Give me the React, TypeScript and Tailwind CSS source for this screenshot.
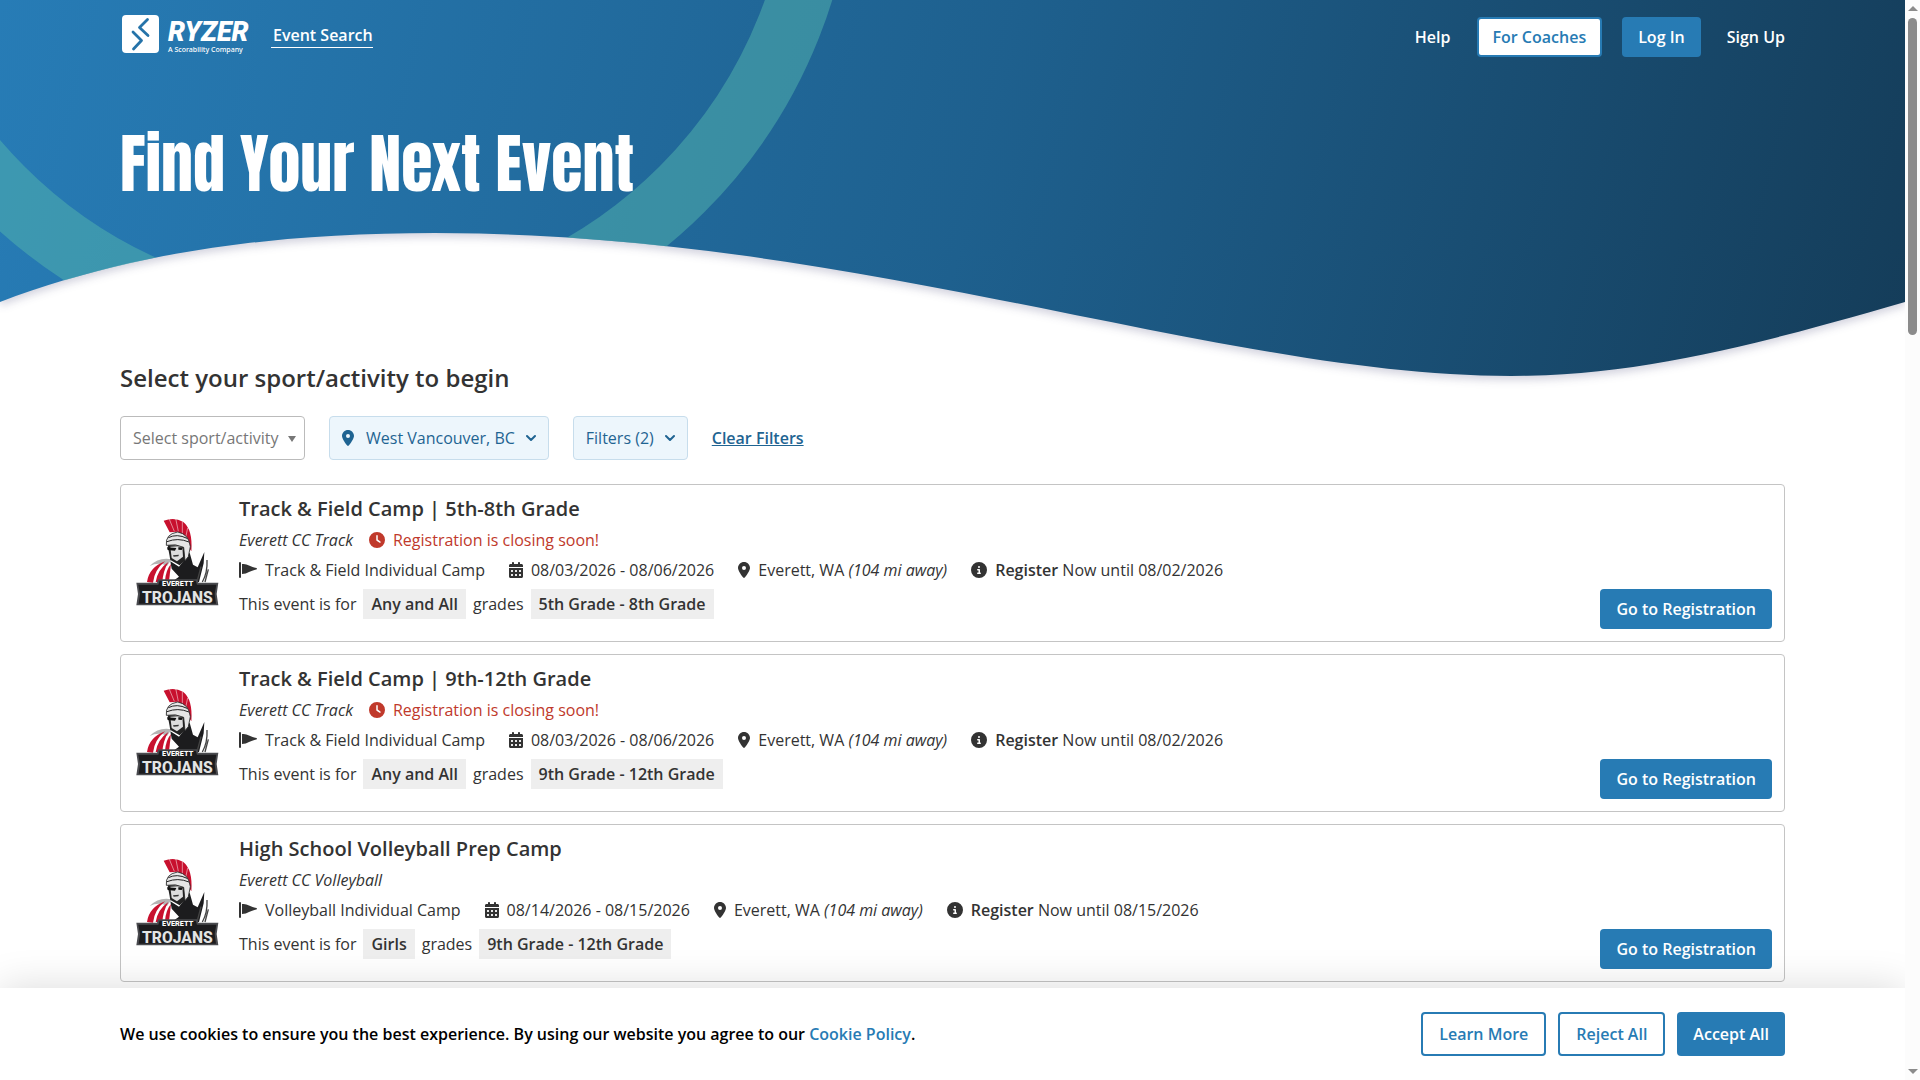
import React from "react";
import { FaCalendarDays, FaCircleInfo, FaClock, FaLocationDot } from "react-icons/fa6";

const BTN = "h-10 rounded-sm bg-[#277bb4] px-4 font-semibold text-white";
const BTN_OUTLINE = "h-11 rounded-sm border-2 border-[#277bb4] bg-white px-4 font-semibold text-[#277bb4]";
const BTN_FILTER = "flex h-11 items-center rounded-sm border border-[#c7ddec] bg-[#edf6fc] px-3 text-[#1f6492]";

const events = [
  {
    title: "Track & Field Camp | 5th-8th Grade",
    team: "Everett CC Track",
    closing: true,
    type: "Track & Field Individual Camp",
    dates: "08/03/2026 - 08/06/2026",
    until: "08/02/2026",
    who: "Any and All",
    grades: "5th Grade - 8th Grade",
  },
  {
    title: "Track & Field Camp | 9th-12th Grade",
    team: "Everett CC Track",
    closing: true,
    type: "Track & Field Individual Camp",
    dates: "08/03/2026 - 08/06/2026",
    until: "08/02/2026",
    who: "Any and All",
    grades: "9th Grade - 12th Grade",
  },
  {
    title: "High School Volleyball Prep Camp",
    team: "Everett CC Volleyball",
    closing: false,
    type: "Volleyball Individual Camp",
    dates: "08/14/2026 - 08/15/2026",
    until: "08/15/2026",
    who: "Girls",
    grades: "9th Grade - 12th Grade",
  },
];

type CampEvent = (typeof events)[number];

const RyzerLogo = () => (
  <svg width="130" height="42" viewBox="0 0 130 42" fill="none" aria-label="Ryzer">
    <rect x="0" y="1" width="37" height="38" rx="4" fill="#fff" />
    <path d="M25.500 5.500L17.500 13.500L26 21.500M11 18L19.500 26.500L11.500 35" stroke="#2573a9" strokeWidth="2.800" strokeLinecap="round" strokeLinejoin="round" />
    <text x="46" y="27" fill="#fff" fontSize="27" fontStyle="italic" fontWeight="900" fontFamily="Roboto, sans-serif">RYZER</text>
    <text x="46" y="38" fill="#fff" fontSize="7" fontWeight="500" fontFamily="'Noto Sans', sans-serif">A Scorability Company</text>
  </svg>
);

const TrojansLogo = () => (
  <svg width="100" height="110" viewBox="0 0 300 330" aria-label="Everett Trojans">
    {/* crest */}
    <path d="M104 44Q136 32 162 47Q192 70 187 136L175 118Q166 88 146 77L122 79Z" fill="#c8102e" />
    <path d="M121 40L136 76M140 37L148 76M160 46L160 82M176 66L170 94" stroke="#fff" strokeWidth="1.500" />
    {/* cape stripes */}
    <path d="M62 180Q90 152 128 160L114 180Q90 166 62 180Z" fill="#b4b4b4" />
    <path d="M54 228Q60 184 108 166Q76 192 72 230Z" fill="#c8102e" />
    <path d="M80 228Q86 190 118 168Q102 196 100 228Z" fill="#c8102e" />
    <path d="M108 226Q110 192 126 174L120 226Z" fill="#c8102e" />
    {/* body */}
    <path d="M124 166L150 182L182 140L192 176L206 184L226 138L224 172L210 228H128L150 212L128 188Z" fill="#1c1c1e" />
    <path d="M234 162Q236 200 220 228M238 190L228 228M216 182L204 228" stroke="#444" strokeWidth="4" fill="none" />
    {/* face and helmet */}
    <path d="M116 118L178 118L180 150L152 178L124 162Z" fill="#222" />
    <path d="M124 122L160 120L162 152L144 166L128 156Z" fill="#ddd" />
    <path d="M114 124L142 126L138 134L116 132ZM148 124L162 124L158 132L148 131Z" fill="#111" />
    <path d="M132 148L150 146L148 151L134 152Z" fill="#333" />
    <path d="M112 118Q108 84 146 78Q180 84 184 122L178 152L168 164L164 124Q140 112 112 118Z" fill="#e6e6e6" stroke="#222" strokeWidth="2.500" />
    <path d="M114 107Q146 94 180 108M118 95Q144 82 174 97" stroke="#222" strokeWidth="3" fill="none" />
    {/* name plate */}
    <path d="M22 230H84L88 220H204L208 230H268L263 264L268 298H22L27 264Z" fill="#4a4b4f" />
    <path d="M92 224H200L204 236H262L257 264L261 293H29L33 264L28 236H88Z" fill="#1c1c1e" />
    <text x="146" y="240" textAnchor="middle" fill="#fff" fontSize="22" fontWeight="800" fontFamily="Roboto, sans-serif">EVERETT</text>
    <text x="145" y="290" textAnchor="middle" fill="#e4e4e4" fontSize="47" fontWeight="800" fontFamily="Roboto, sans-serif">TROJANS</text>
  </svg>
);

const Pennant = () => (
  <svg width="18" height="16" viewBox="0 0 18 16" fill="currentColor" aria-hidden="true">
    <rect x="0" y="0" width="2" height="16" rx="1" />
    <path d="M3 2Q7 1.500 10 3.500Q14 5.500 17.500 6Q18.300 6.700 17.500 7.400Q13 8.500 10 10Q7 12 3 12Z" />
  </svg>
);

const Chevron = () => (
  <svg className="ml-[11px]" width="10" height="12" viewBox="0 0 10 12" fill="none" stroke="currentColor" strokeWidth="2" strokeLinecap="round" strokeLinejoin="round" aria-hidden="true">
    <path d="M1 4L5 8L9 4" />
  </svg>
);

const Hero = () => (
  <section className="relative h-[360px]">
    <svg className="absolute top-0 left-0 h-[400px] w-full" viewBox="0 0 1905 400" preserveAspectRatio="none" aria-hidden="true">
      <defs>
        <linearGradient id="sky" gradientUnits="userSpaceOnUse" x1="0" y1="0" x2="1920" y2="480">
          <stop offset="0" stopColor="#277cb6" />
          <stop offset="0.500" stopColor="#1e608e" />
          <stop offset="1" stopColor="#143b57" />
        </linearGradient>
        <clipPath id="wave">
          <path d="M0 0H1905V302C1760 344 1640 376 1511 376C1220 376 860 233 435 233C270 233 130 253 0 302Z" />
        </clipPath>
      </defs>
      <path
        className="drop-shadow-[0_4px_4px_rgba(30,30,90,0.2)]"
        d="M0 0H1905V302C1760 344 1640 376 1511 376C1220 376 860 233 435 233C270 233 130 253 0 302Z"
        fill="url(#sky)"
      />
      <circle cx="342" cy="-151" r="481" fill="none" stroke="#54b5ad" strokeOpacity="0.500" strokeWidth="64" clipPath="url(#wave)" />
    </svg>

    <div className="relative px-[120px]">
      <header className="flex h-[74px] items-center justify-between text-white">
        <div className="flex items-center gap-[19px] pb-1">
          <a href="#" className="pl-[2px]"><RyzerLogo /></a>
          <a href="#" className="border-b border-white pl-[2px] font-semibold leading-6">Event Search</a>
        </div>
        <nav className="flex items-center font-semibold">
          <a href="#" className="mr-[26px]">Help</a>
          <button className="mr-5 h-10 rounded-sm border-2 border-[#277bb4] bg-white px-[14px] font-semibold text-[#277bb4]">For Coaches</button>
          <button className={`${BTN} mr-[26px]`}>Log In</button>
          <a href="#">Sign Up</a>
        </nav>
      </header>
      <h1 className="pt-[42px] font-[Anton,'Liberation_Sans',sans-serif] text-[64px] leading-[96px] font-normal text-white">
        Find Your Next Event
      </h1>
    </div>
  </section>
);

const Filters = () => (
  <div className="mt-5 flex flex-wrap items-center gap-6">
    <div className="relative">
      <select aria-label="Sport or activity" className="h-11 w-[185px] appearance-none rounded-sm border border-[#bbb] bg-white px-3 text-[#777]">
        <option>Select sport/activity</option>
      </select>
      <span className="pointer-events-none absolute top-5 right-[9px] border-x-4 border-t-[6px] border-x-transparent border-t-[#777]" />
    </div>
    <button className={BTN_FILTER}>
      <FaLocationDot className="mr-3 w-3" />
      West Vancouver, BC
      <Chevron />
    </button>
    <button className={BTN_FILTER}>
      Filters (2)
      <Chevron />
    </button>
    <a href="#" className="font-semibold text-[#1f6492] underline">Clear Filters</a>
  </div>
);

const EventCard = ({ event }: { event: CampEvent }) => (
  <article className="flex h-[158px] shrink-0 rounded-sm border border-[#c4c4c4] px-3">
    <div className="flex w-[106px] items-center pb-1"><div className="-ml-1"><TrojansLogo /></div></div>
    <div className="flex-1 pt-2">
      <h3 className="text-xl leading-8 font-semibold">{event.title}</h3>
      <div className="flex h-[30px] items-center gap-4">
        <em>{event.team}</em>
        {event.closing && (
          <span className="flex items-center gap-2 text-[#c0392b]">
            <FaClock />
            Registration is closing soon!
          </span>
        )}
      </div>
      <div className="flex h-[30px] items-center gap-6">
        <span className="flex items-center gap-2"><Pennant />{event.type}</span>
        <span className="flex items-center gap-2"><FaCalendarDays className="w-[14px]" />{event.dates}</span>
        <span className="flex items-center gap-2">
          <FaLocationDot className="w-3" />
          <span>Everett, WA <em>(104 mi away)</em></span>
        </span>
        <span className="flex items-center gap-2">
          <FaCircleInfo />
          <span><b className="font-semibold">Register</b> Now until {event.until}</span>
        </span>
      </div>
      <div className="mt-1 flex h-[30px] items-center gap-[7px]">
        This event is for
        <b className="bg-[#eee] px-2 leading-[30px] font-semibold">{event.who}</b>
        grades
        <b className="bg-[#eee] px-2 leading-[30px] font-semibold">{event.grades}</b>
      </div>
    </div>
    <button className={`${BTN} mb-3 self-end`}>Go to Registration</button>
  </article>
);

const CookieBar = () => (
  <footer className="relative flex shrink-0 items-center justify-between bg-white px-[120px] py-6 font-semibold text-black shadow-[0_0_40px_rgba(0,0,0,0.15)]">
    <p>
      We use cookies to ensure you the best experience. By using our website you agree to our{" "}
      <a href="#" className="text-[#277bb4]">Cookie Policy</a>.
    </p>
    <div className="flex gap-3">
      <button className={BTN_OUTLINE}>Learn More</button>
      <button className={BTN_OUTLINE}>Reject All</button>
      <button className="h-11 rounded-sm bg-[#277bb4] px-4 font-semibold text-white">Accept All</button>
    </div>
  </footer>
);

const ScrollBar = () => (
  <div className="relative z-10 flex w-[15px] shrink-0 flex-col items-center justify-between bg-[#fcfcfc] py-[6px]" aria-hidden="true">
    <div className="flex flex-col items-center gap-[7px]">
      <span className="border-x-[5px] border-b-[5px] border-x-transparent border-b-[#8b8b8b]" />
      <span className="h-[317px] w-[9px] rounded-full bg-[#8b8b8b]" />
    </div>
    <span className="border-x-[5px] border-t-[5px] border-x-transparent border-t-[#8b8b8b]" />
  </div>
);

export default function App() {
  return (
    <div className="flex h-screen overflow-hidden bg-white font-['Open_Sans',sans-serif] text-base text-[#333]">
      <div className="flex min-w-0 flex-1 flex-col overflow-hidden">
        <div className="min-h-0 flex-1 overflow-hidden">
          <Hero />
          <main className="relative px-[120px]">
            <h2 className="text-2xl leading-9 font-semibold">Select your sport/activity to begin</h2>
            <Filters />
            <div className="mt-6 flex flex-col gap-3">
              {events.map((event) => (
                <EventCard key={event.title} event={event} />
              ))}
            </div>
          </main>
        </div>
        <CookieBar />
      </div>
      <ScrollBar />
    </div>
  );
}
